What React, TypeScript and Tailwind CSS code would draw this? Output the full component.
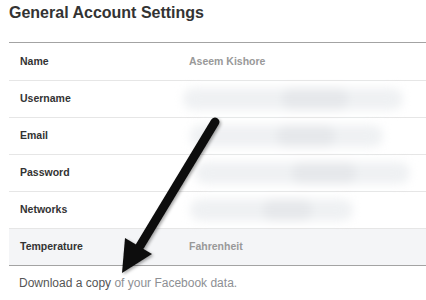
import React from "react";

const rows: { label: string; value?: string; bar?: [number, number]; bg?: boolean }[] = [
  { label: "Name", value: "Aseem Kishore" },
  { label: "Username", bar: [183, 403] },
  { label: "Email", bar: [190, 383] },
  { label: "Password", bar: [195, 410] },
  { label: "Networks", bar: [190, 353] },
  { label: "Temperature", value: "Fahrenheit", bg: true },
];

export default function App() {
  return (
    <div
      className="relative w-[426px] h-[300px] bg-white overflow-hidden"
      style={{ fontFamily: '"Liberation Sans", Arial, sans-serif' }}
    >
      <div className="pl-[9px] pt-[3px] h-[42px] text-[16px] font-bold text-[#333] leading-[20px]">
        General Account Settings
      </div>
      <div className="ml-[9px] border-t border-[#a3a3a3] border-b">
        {rows.map((r, i) => (
          <div
            key={r.label}
            className={`flex items-center h-[37px] ${i > 0 ? "border-t border-[#e6e6e6]" : ""} ${
              r.bg ? "bg-[#f4f5f7]" : ""
            }`}
          >
            <div className="w-[180px] pl-[11px] text-[10.5px] font-bold text-[#333]">{r.label}</div>
            {r.value && <div className="text-[10.5px] font-bold text-[#999]">{r.value}</div>}
            {r.bar && (
              <div
                className="h-[22px] rounded-full bg-[#eff1f3] blur-[5px]"
                style={{ marginLeft: r.bar[0] - 189, width: r.bar[1] - r.bar[0] }}
              >
                <div className="ml-[45%] w-[30%] h-full rounded-full bg-[#e6e8eb]" />
              </div>
            )}
          </div>
        ))}
      </div>
      <div className="pl-[19px] pt-[10px] text-[12px] leading-[14px]">
        <span className="text-[#555]">Download a copy</span>
        <span className="text-[#8d8f94]"> of your Facebook data.</span>
      </div>
      <svg className="absolute left-0 top-0" width="426" height="300" viewBox="0 0 426 300">
        <defs>
          <filter id="sh" x="-20%" y="-20%" width="140%" height="140%">
            <feDropShadow dx="1.5" dy="1.5" stdDeviation="1.5" floodColor="#000" floodOpacity="0.35" />
          </filter>
        </defs>
        <g filter="url(#sh)">
          <line x1="215" y1="122" x2="140" y2="246" stroke="#111" strokeWidth="9" strokeLinecap="round" />
          <polygon points="122,273 125,238 152,254" fill="#111" />
        </g>
      </svg>
    </div>
  );
}
